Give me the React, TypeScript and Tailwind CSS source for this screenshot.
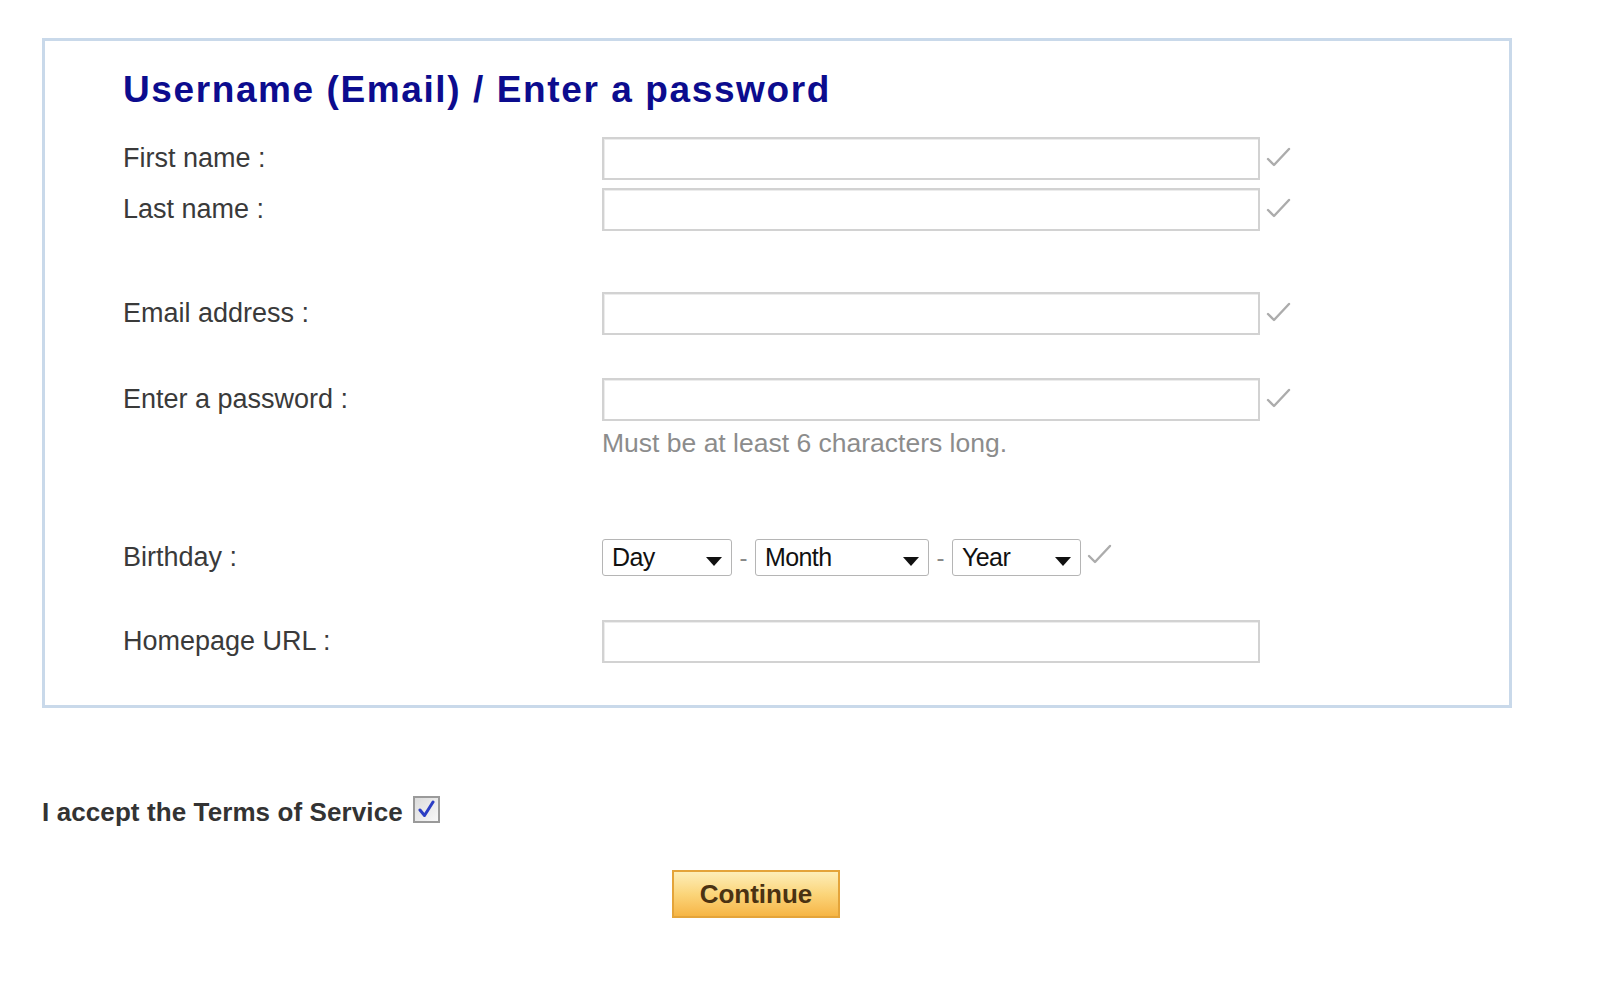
import React from "react";

const Check = ({ className = "" }: { className?: string }) => (
  <svg className={className} width="26" height="26" viewBox="0 0 26 26" fill="none">
    <path d="M3 15 L9 21 L24 5" stroke="#acacac" strokeWidth="2.4" strokeLinecap="round" strokeLinejoin="round" />
  </svg>
);

const Arrow = () => (
  <svg width="16" height="9" viewBox="0 0 16 9">
    <path d="M0 0 L16 0 L8 9 Z" fill="#111" />
  </svg>
);

const Field = ({ label, check = true }: { label: string; check?: boolean }) => (
  <div className="flex items-center h-[43px]">
    <div className="w-[479px] text-[27px] text-[#3a3a3a] leading-none">{label}</div>
    <div className="w-[658px] h-[43px] border-2 border-[#d2d2d2] bg-white shadow-[inset_1px_1px_0_#ececec]" />
    {check && <Check className="ml-[5px] -mt-[4px]" />}
  </div>
);

const Select = ({ text, w }: { text: string; w: string }) => (
  <div className={`${w} h-[37px] border border-[#b5b5b5] rounded-[3px] bg-white flex items-center justify-between pl-[9px] pr-[9px]`}>
    <span className="text-[25px] text-[#111] leading-none tracking-[-0.6px]">{text}</span>
    <span className="mt-[8px]"><Arrow /></span>
  </div>
);

export default function App() {
  return (
    <div className="w-[1600px] h-[991px] bg-white pt-[38px] pl-[42px]" style={{ fontFamily: '"Liberation Sans", Arial, sans-serif' }}>
      <div className="w-[1470px] border-[3px] border-[#c9d9ea] pl-[78px] pb-[42px]">
        <h1 className="mt-[28px] text-[37px] leading-[42px] font-bold text-[#0c0c8e] tracking-[1.6px]">
          Username (Email) / Enter a password
        </h1>
        <div className="mt-[26px]">
          <Field label="First name :" />
        </div>
        <div className="mt-[8px]">
          <Field label="Last name :" />
        </div>
        <div className="mt-[61px]">
          <Field label="Email address :" />
        </div>
        <div className="mt-[43px]">
          <Field label="Enter a password :" />
        </div>
        <div className="mt-[9px] ml-[479px] text-[26.5px] leading-[26px] text-[#8c8c8c]">
          Must be at least 6 characters long.
        </div>
        <div className="mt-[83px] flex items-center h-[37px]">
          <div className="w-[479px] text-[27px] text-[#3a3a3a] leading-none">Birthday :</div>
          <Select text="Day" w="w-[130px]" />
          <span className="w-[23px] text-center text-[24px] text-[#888] leading-none">-</span>
          <Select text="Month" w="w-[174px]" />
          <span className="w-[23px] text-center text-[24px] text-[#888] leading-none">-</span>
          <Select text="Year" w="w-[129px]" />
          <Check className="ml-[5px] -mt-[8px]" />
        </div>
        <div className="mt-[44px]">
          <Field label="Homepage URL :" check={false} />
        </div>
      </div>

      <div className="mt-[89px] flex items-center h-[30px]">
        <span className="text-[26px] font-bold text-[#333] leading-none tracking-[0.1px]">I accept the Terms of Service</span>
        <span className="ml-[10px] -mt-[6px] w-[27px] h-[27px] border-2 border-[#9a9a9a] bg-gradient-to-br from-[#dcdcdc] to-[#f8f8f8] flex items-center justify-center">
          <svg width="19" height="19" viewBox="0 0 19 19" fill="none">
            <path d="M3 10 L7.5 15.5 L16 2" stroke="#2c3ec4" strokeWidth="3" strokeLinecap="round" strokeLinejoin="round" />
          </svg>
        </span>
      </div>

      <div className="mt-[43px] ml-[630px]">
        <button className="w-[168px] h-[48px] border-2 border-[#e4a43a] bg-gradient-to-b from-[#fdeeb8] via-[#fbd57a] to-[#f6b544] text-[26px] font-bold text-[#4a3212] leading-none">
          Continue
        </button>
      </div>
    </div>
  );
}
